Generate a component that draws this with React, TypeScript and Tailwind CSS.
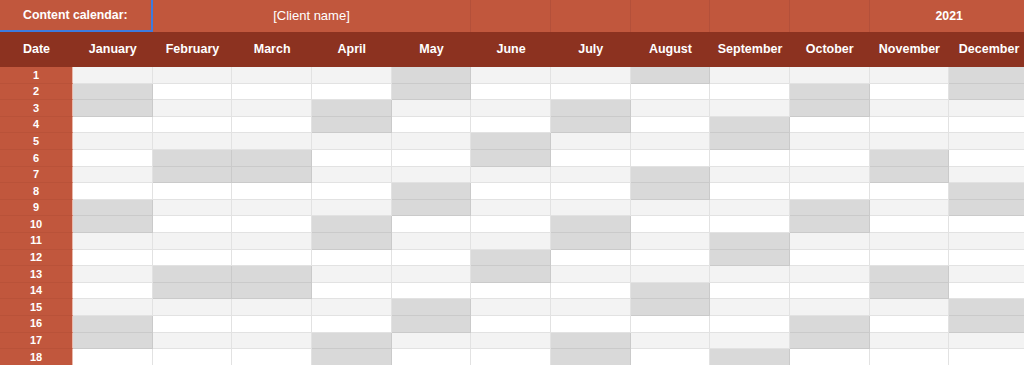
const months = [
  'January', 'February', 'March', 'April', 'May', 'June',
  'July', 'August', 'September', 'October', 'November', 'December',
]

const shaded: number[][] = [
  [2, 3, 9, 10, 16, 17],
  [6, 7, 13, 14],
  [6, 7, 13, 14],
  [3, 4, 10, 11, 17, 18],
  [1, 2, 8, 9, 15, 16],
  [5, 6, 12, 13],
  [3, 4, 10, 11, 17, 18],
  [1, 7, 8, 14, 15],
  [4, 5, 11, 12, 18],
  [2, 3, 9, 10, 16, 17],
  [6, 7, 13, 14],
  [1, 2, 8, 9, 15, 16],
]

const days = Array.from({ length: 18 }, (_, i) => i + 1)

export default function App() {
  return (
    <div className="h-[365px] w-[1024px] overflow-hidden bg-white font-['Liberation_Sans',Arial,sans-serif]">
      <div className="grid w-[1029px] grid-cols-[73px_repeat(12,79.67px)]">
        {/* title row */}
        <div className="col-span-2 flex h-8 items-center justify-center border-r-2 border-b-2 border-[#3d7be0] bg-[#c1573d] text-[12.3px] font-bold text-white">
          Content calendar:
        </div>
        <div className="col-span-4 flex h-8 items-center justify-center border-r border-[#b4503a] bg-[#c1573d] text-[13px] text-white">
          [Client name]
        </div>
        <div className="h-8 border-r border-[#b4503a] bg-[#c1573d]" />
        <div className="h-8 border-r border-[#b4503a] bg-[#c1573d]" />
        <div className="h-8 border-r border-[#b4503a] bg-[#c1573d]" />
        <div className="h-8 border-r border-[#b4503a] bg-[#c1573d]" />
        <div className="h-8 border-r border-[#b4503a] bg-[#c1573d]" />
        <div className="col-span-2 flex h-8 items-center justify-center bg-[#c1573d] text-[12.3px] font-bold text-white">
          2021
        </div>

        {/* header row */}
        <div className="flex h-[35px] items-center justify-center bg-[#8c3220] text-[12.5px] font-bold text-white">
          Date
        </div>
        {months.map((m) => (
          <div
            key={m}
            className="flex h-[35px] items-center justify-center bg-[#8c3220] text-[12.5px] font-bold text-white"
          >
            {m}
          </div>
        ))}

        {/* day rows */}
        {days.map((d) => (
          <div key={d} className="contents">
            <div className="flex h-[16.6px] items-center justify-center border-r border-b border-r-[#e9b8aa] border-b-[#b95239] bg-[#c1573d] text-[11px] font-bold text-white">
              {d}
            </div>
            {months.map((m, mi) => {
              const isShaded = shaded[mi].includes(d)
              return (
                <div
                  key={m}
                  className={`h-[16.6px] border-r border-b ${
                    isShaded
                      ? 'border-[#cacaca] bg-[#d9d9d9]'
                      : d % 2 === 1
                        ? 'border-[#e2e2e2] bg-[#f3f3f3]'
                        : 'border-[#e2e2e2] bg-white'
                  }`}
                />
              )
            })}
          </div>
        ))}
      </div>
    </div>
  )
}
